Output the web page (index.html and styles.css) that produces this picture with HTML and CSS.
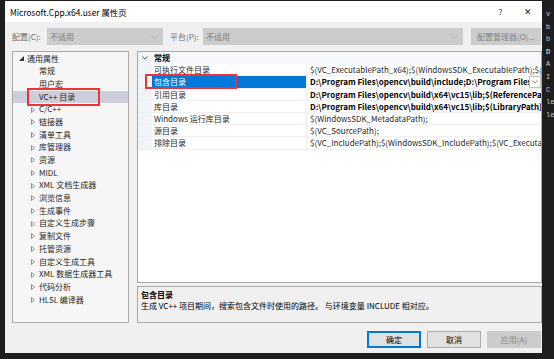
FILE: index.html
```html
<!DOCTYPE html>
<html lang="zh-CN">
<head>
  <meta charset="UTF-8">
  <title>Microsoft.Cpp.x64.user 属性页</title>
  <link rel="stylesheet" href="styles.css">
</head>
<body>

<!-- 对话框 -->
<div class="dialog">
  <div class="titlebar">
    <span class="title">Microsoft.Cpp.x64.user 属性页</span>
    <span class="title-btn help">?</span>
    <span class="title-btn close">✕</span>
  </div>

  <!-- 配置 / 平台 -->
  <div class="config-row">
    <span class="label">配置(C):</span>
    <div class="combo combo-config">
      <span>不适用</span>
      <svg class="chev" width="7" height="4" viewBox="0 0 7 4"><path d="M0.5 0.5 L3.5 3.5 L6.5 0.5" fill="none" stroke="#a8a8a8" stroke-width="0.8"/></svg>
    </div>
    <span class="label label-platform">平台(P):</span>
    <div class="combo combo-platform">
      <span>不适用</span>
      <svg class="chev" width="7" height="4" viewBox="0 0 7 4"><path d="M0.5 0.5 L3.5 3.5 L6.5 0.5" fill="none" stroke="#a8a8a8" stroke-width="0.8"/></svg>
    </div>
    <button class="btn btn-disabled btn-manager">配置管理器(O)...</button>
  </div>

  <div class="main">
    <!-- 左侧树 -->
    <div class="tree">
      <div class="tree-item level0"><span class="tri"><svg width="5" height="5" viewBox="0 0 5 5"><path d="M5 0 L5 5 L0 5 Z" fill="#333"/></svg></span>通用属性</div>
      <div class="tree-item level1"><span class="tri"></span>常规</div>
      <div class="tree-item level1"><span class="tri"></span>用户宏</div>
      <div class="tree-item level1 selected"><span class="tri"></span>VC++ 目录</div>
      <div class="tree-item level1"><span class="tri"><svg width="4" height="6" viewBox="0 0 4 6"><path d="M0.5 0.5 L3.5 3 L0.5 5.5 Z" fill="none" stroke="#777" stroke-width="0.8"/></svg></span>C/C++</div>
      <div class="tree-item level1"><span class="tri"><svg width="4" height="6" viewBox="0 0 4 6"><path d="M0.5 0.5 L3.5 3 L0.5 5.5 Z" fill="none" stroke="#777" stroke-width="0.8"/></svg></span>链接器</div>
      <div class="tree-item level1"><span class="tri"><svg width="4" height="6" viewBox="0 0 4 6"><path d="M0.5 0.5 L3.5 3 L0.5 5.5 Z" fill="none" stroke="#777" stroke-width="0.8"/></svg></span>清单工具</div>
      <div class="tree-item level1"><span class="tri"><svg width="4" height="6" viewBox="0 0 4 6"><path d="M0.5 0.5 L3.5 3 L0.5 5.5 Z" fill="none" stroke="#777" stroke-width="0.8"/></svg></span>库管理器</div>
      <div class="tree-item level1"><span class="tri"><svg width="4" height="6" viewBox="0 0 4 6"><path d="M0.5 0.5 L3.5 3 L0.5 5.5 Z" fill="none" stroke="#777" stroke-width="0.8"/></svg></span>资源</div>
      <div class="tree-item level1"><span class="tri"><svg width="4" height="6" viewBox="0 0 4 6"><path d="M0.5 0.5 L3.5 3 L0.5 5.5 Z" fill="none" stroke="#777" stroke-width="0.8"/></svg></span>MIDL</div>
      <div class="tree-item level1"><span class="tri"><svg width="4" height="6" viewBox="0 0 4 6"><path d="M0.5 0.5 L3.5 3 L0.5 5.5 Z" fill="none" stroke="#777" stroke-width="0.8"/></svg></span>XML 文档生成器</div>
      <div class="tree-item level1"><span class="tri"><svg width="4" height="6" viewBox="0 0 4 6"><path d="M0.5 0.5 L3.5 3 L0.5 5.5 Z" fill="none" stroke="#777" stroke-width="0.8"/></svg></span>浏览信息</div>
      <div class="tree-item level1"><span class="tri"><svg width="4" height="6" viewBox="0 0 4 6"><path d="M0.5 0.5 L3.5 3 L0.5 5.5 Z" fill="none" stroke="#777" stroke-width="0.8"/></svg></span>生成事件</div>
      <div class="tree-item level1"><span class="tri"><svg width="4" height="6" viewBox="0 0 4 6"><path d="M0.5 0.5 L3.5 3 L0.5 5.5 Z" fill="none" stroke="#777" stroke-width="0.8"/></svg></span>自定义生成步骤</div>
      <div class="tree-item level1"><span class="tri"><svg width="4" height="6" viewBox="0 0 4 6"><path d="M0.5 0.5 L3.5 3 L0.5 5.5 Z" fill="none" stroke="#777" stroke-width="0.8"/></svg></span>复制文件</div>
      <div class="tree-item level1"><span class="tri"><svg width="4" height="6" viewBox="0 0 4 6"><path d="M0.5 0.5 L3.5 3 L0.5 5.5 Z" fill="none" stroke="#777" stroke-width="0.8"/></svg></span>托管资源</div>
      <div class="tree-item level1"><span class="tri"><svg width="4" height="6" viewBox="0 0 4 6"><path d="M0.5 0.5 L3.5 3 L0.5 5.5 Z" fill="none" stroke="#777" stroke-width="0.8"/></svg></span>自定义生成工具</div>
      <div class="tree-item level1"><span class="tri"><svg width="4" height="6" viewBox="0 0 4 6"><path d="M0.5 0.5 L3.5 3 L0.5 5.5 Z" fill="none" stroke="#777" stroke-width="0.8"/></svg></span>XML 数据生成器工具</div>
      <div class="tree-item level1"><span class="tri"><svg width="4" height="6" viewBox="0 0 4 6"><path d="M0.5 0.5 L3.5 3 L0.5 5.5 Z" fill="none" stroke="#777" stroke-width="0.8"/></svg></span>代码分析</div>
      <div class="tree-item level1"><span class="tri"><svg width="4" height="6" viewBox="0 0 4 6"><path d="M0.5 0.5 L3.5 3 L0.5 5.5 Z" fill="none" stroke="#777" stroke-width="0.8"/></svg></span>HLSL 编译器</div>
      <!-- 标注框 -->
      <div class="mark mark-tree"></div>
    </div>

    <!-- 右侧属性表 -->
    <div class="right">
      <div class="grid">
        <div class="row category">
          <span class="gutter"><svg width="6" height="4" viewBox="0 0 6 4"><path d="M0.5 0.5 L3 3.2 L5.5 0.5" fill="none" stroke="#444" stroke-width="0.9"/></svg></span>
          <span class="cat-name">常规</span>
        </div>
        <div class="row">
          <span class="gutter"></span>
          <span class="name">可执行文件目录</span>
          <span class="value">$(VC_ExecutablePath_x64);$(WindowsSDK_ExecutablePath);$(VS_ExecutablePath);$(MSBuild_ExecutablePath)</span>
        </div>
        <div class="row active">
          <span class="gutter"></span>
          <span class="name">包含目录</span>
          <span class="value bold">D:\Program Files\opencv\build\include;D:\Program Files\opencv\build\include\opencv2;$(IncludePath)</span>
          <span class="drop"><svg width="6" height="4" viewBox="0 0 6 4"><path d="M0.5 0.5 L3 3.2 L5.5 0.5" fill="none" stroke="#666" stroke-width="0.8"/></svg></span>
        </div>
        <div class="row">
          <span class="gutter"></span>
          <span class="name">引用目录</span>
          <span class="value bold">D:\Program Files\opencv\build\x64\vc15\lib;$(ReferencePath)</span>
        </div>
        <div class="row">
          <span class="gutter"></span>
          <span class="name">库目录</span>
          <span class="value bold">D:\Program Files\opencv\build\x64\vc15\lib;$(LibraryPath)</span>
        </div>
        <div class="row">
          <span class="gutter"></span>
          <span class="name">Windows 运行库目录</span>
          <span class="value">$(WindowsSDK_MetadataPath);</span>
        </div>
        <div class="row">
          <span class="gutter"></span>
          <span class="name">源目录</span>
          <span class="value">$(VC_SourcePath);</span>
        </div>
        <div class="row">
          <span class="gutter"></span>
          <span class="name">排除目录</span>
          <span class="value">$(VC_IncludePath);$(WindowsSDK_IncludePath);$(VC_ExecutablePath_x64);$(VC_LibraryPath_x64)</span>
        </div>
        <!-- 标注框 -->
        <div class="mark mark-grid"></div>
      </div>

      <div class="desc">
        <div class="desc-title">包含目录</div>
        <div class="desc-text">生成 VC++ 项目期间，搜索包含文件时使用的路径。 与环境变量 INCLUDE 相对应。</div>
      </div>
    </div>
  </div>

  <!-- 按钮 -->
  <div class="buttons">
    <button class="btn btn-default">确定</button>
    <button class="btn">取消</button>
    <button class="btn btn-disabled">应用(A)</button>
  </div>
</div>

<!-- 背后编辑器的残留 -->
<div class="editor-strip">
  <div class="line">v</div>
  <div class="line">b</div>
  <div class="line">b</div>
  <div class="line lit">D</div>
  <div class="line">A</div>
  <div class="line">I</div>
  <div class="line">C</div>
  <div class="line">le</div>
  <div class="line">le</div>
</div>

</body>
</html>
```

FILE: styles.css
```css
/* 基本 */
* {
  margin: 0;
  padding: 0;
  box-sizing: border-box;
}

html, body {
  width: 554px;
  height: 359px;
  overflow: hidden;
}

body {
  background-color: #1e1e1e;
  font-family: 'Noto Sans CJK SC', 'Noto Sans', sans-serif;
  font-size: 8px;
  color: #000;
  display: flex;
}

/* 对话框 */
.dialog {
  margin-left: 5px;
  margin-top: 1px;
  width: 537px;
  height: 352px;
  background-color: #f0f0f0;
  display: flex;
  flex-direction: column;
  flex-shrink: 0;
}

.titlebar {
  height: 21px;
  background-color: #fff;
  display: flex;
  align-items: center;
  padding-left: 5px;
  font-size: 8.4px;
}

.title {
  flex: 1;
}

.title-btn {
  width: 27px;
  text-align: center;
  color: #222;
}

.title-btn.help {
  font-size: 8px;
}

.title-btn.close {
  font-size: 9px;
  margin-right: 1px;
}

/* 配置行 */
.config-row {
  display: flex;
  align-items: center;
  height: 17px;
  margin-top: 6px;
  padding-left: 7px;
  color: #6d6d6d;
}

.label {
  width: 35px;
}

.label-platform {
  margin-left: 7px;
  width: 33px;
}

.combo {
  height: 17px;
  background-color: #cccccc;
  display: flex;
  align-items: center;
  justify-content: space-between;
  padding: 0 5px 0 3px;
  color: #7a7a7a;
}

.combo-config {
  width: 116px;
}

.combo-platform {
  width: 260px;
}

.chev {
  display: block;
}

.btn {
  font-family: inherit;
  font-size: 8px;
  height: 17px;
  width: 54px;
  border: 1px solid #adadad;
  background-color: #e1e1e1;
  color: #000;
}

.btn-disabled {
  background-color: #cccccc;
  border-color: #cccccc;
  color: #838383;
}

.btn-default {
  border: 1px solid #0078d7;
  box-shadow: inset 0 0 0 1px #0078d7;
}

.btn-manager {
  margin-left: 8px;
  width: 70px;
}

/* 主区域 */
.main {
  display: flex;
  gap: 8px;
  margin-top: 6px;
  padding-left: 7px;
}

.tree {
  position: relative;
  width: 117px;
  height: 272px;
  background-color: #f6f6f6;
  border: 1px solid #a9a9a9;
  padding-top: 0.5px;
}

.tree-item {
  height: 12.7px;
  line-height: 12.7px;
  display: flex;
  align-items: center;
  white-space: nowrap;
  color: #1e1e1e;
}

.tree-item .tri {
  width: 8px;
  display: flex;
  align-items: center;
}

.level0 {
  padding-left: 6px;
}

.level1 {
  padding-left: 18px;
}

.tree-item.selected {
  background-color: #cccedb;
}

.mark {
  position: absolute;
  border: 2px solid #e8353b;
  pointer-events: none;
}

.mark-tree {
  left: 14px;
  top: 36px;
  width: 73px;
  height: 18px;
}

/* 属性表 */
.right {
  width: 405px;
  display: flex;
  flex-direction: column;
  gap: 3px;
}

.grid {
  position: relative;
  height: 232px;
  background-color: #fff;
  border: 1px solid #a9a9a9;
  overflow: hidden;
}

.row {
  display: flex;
  height: 12.2px;
  line-height: 12px;
  border-bottom: 1px solid #f0f0f0;
  white-space: nowrap;
}

.row .gutter {
  width: 14px;
  flex-shrink: 0;
  background-color: #f0f4f9;
  display: flex;
  align-items: center;
  justify-content: center;
}

.row.category {
  background-color: #f5f7fa;
  border-bottom: none;
}

.cat-name {
  font-weight: bold;
  padding-left: 2px;
}

.row .name {
  width: 155px;
  flex-shrink: 0;
  padding-left: 2px;
  border-right: 1px solid #f0f0f0;
  color: #1e1e1e;
}

.row.active .name {
  background-color: #0078d7;
  color: #fff;
}

.row .value {
  flex: 1;
  padding-left: 3px;
  overflow: hidden;
  color: #1e1e1e;
}

.row .value.bold {
  font-weight: bold;
  color: #000;
}

.drop {
  width: 12px;
  flex-shrink: 0;
  border: 1px solid #c0c0c0;
  background-color: #fff;
  display: flex;
  align-items: center;
  justify-content: center;
}

.mark-grid {
  left: 7px;
  top: 22px;
  width: 92px;
  height: 15px;
}

/* 说明 */
.desc {
  height: 37px;
  border: 1px solid #a9a9a9;
  padding: 2px 3px;
  line-height: 11px;
}

.desc-title {
  font-weight: bold;
}

/* 按钮 */
.buttons {
  display: flex;
  justify-content: flex-end;
  gap: 6px;
  margin-top: 8px;
  padding-right: 1px;
}

/* 背后编辑器 */
.editor-strip {
  padding-top: 10px;
  padding-left: 4px;
  color: #c8c8c8;
  font-family: 'Liberation Mono', monospace;
  font-size: 7px;
}

.editor-strip .line {
  height: 12.6px;
  line-height: 9px;
}

.editor-strip .lit {
  color: #fff;
}
```
